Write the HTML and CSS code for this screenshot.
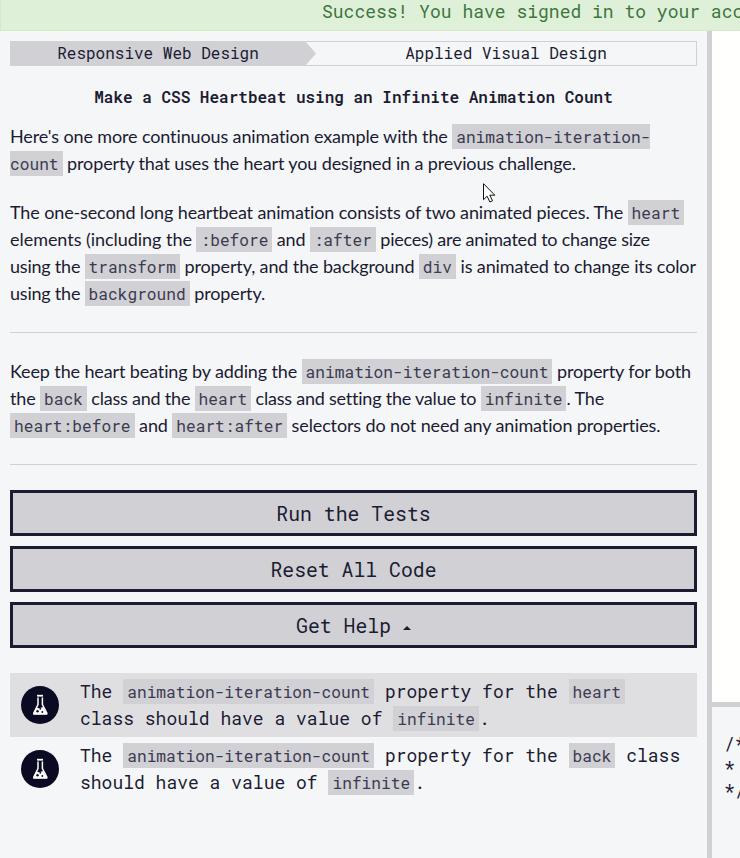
FILE: index.html
```html
<!DOCTYPE html>
<html lang="en">
<head>
<meta charset="utf-8">
<title>Make a CSS Heartbeat using an Infinite Animation Count</title>
<link rel="stylesheet" href="styles.css">
</head>
<body>
<svg class="defs" width="0" height="0">
  <symbol id="flask" viewBox="0 0 38 38">
    <circle cx="19" cy="19" r="19" fill="#0a0a23"/>
    <path d="M16 9.700h6" fill="none" stroke="#fff" stroke-width="1.800"/>
    <path d="M17 11.500v7L12.800 27q-.5 1.100.7 1.100h11.600q1.200 0 .7-1.100L21.400 18.500v-7" fill="none" stroke="#fff" stroke-width="1.500"/>
    <path d="M15.800 21.500q2 1.500 6.500-.5l3.800 7.200H12.300z" fill="#fff"/>
    <circle cx="16.500" cy="25.300" r="1.200" fill="#0a0a23"/>
    <circle cx="19.300" cy="22.800" r=".9" fill="#0a0a23"/>
    <circle cx="21.300" cy="26" r=".9" fill="#0a0a23"/>
  </symbol>
</svg>
<div class="app">
  <div class="flash">Success! You have signed in to your account</div>
  <div class="workspace">
    <main class="instructions">
      <nav class="crumbs">
        <div class="crumb crumb-left">Responsive Web Design</div>
        <div class="crumb crumb-right">Applied Visual Design</div>
      </nav>
      <h1>Make a CSS Heartbeat using an Infinite Animation Count</h1>
      <section class="copy">
        <p>Here's one more continuous animation example with the <code>animation-iteration-<br>count</code> property that uses the heart you designed in a previous challenge.</p>
        <p>The one-second long heartbeat animation consists of two animated pieces. The <code>heart</code><br><span class="loose">elements (including the </span><code>:before</code><span class="tight"> and </span><code>:after</code><span class="tight"> pieces) are animated to change size</span><br><span class="tight">using the </span><code>transform</code> property, and the background <code>div</code> is animated to change its color<br><span class="tight">using the </span><code>background</code> property.</p>
      </section>
      <hr>
      <section class="copy">
        <p>Keep the heart beating by adding the <code>animation-iteration-count</code> property for both<br>the <code>back</code><span class="tight"> class and the </span><code>heart</code><span class="tight"> class and setting the value to </span><code>infinite</code>. The<br><code>heart:before</code> and <code>heart:after</code> selectors do not need any animation properties.</p>
      </section>
      <hr>
      <div class="buttons">
        <button>Run the Tests</button>
        <button>Reset All Code</button>
        <button>Get Help <span class="caret"></span></button>
      </div>
      <ul class="tests">
        <li class="active"><svg class="status"><use href="#flask"/></svg><div>The <code>animation-iteration-count</code> property for the <code>heart</code><br>class should have a value of <code>infinite</code>.</div></li>
        <li><svg class="status"><use href="#flask"/></svg><div>The <code>animation-iteration-count</code> property for the <code>back</code> class<br>should have a value of <code>infinite</code>.</div></li>
      </ul>
    </main>
    <div class="divider"></div>
    <aside class="side">
      <div class="editor"></div>
      <div class="divider-row"></div>
      <pre class="console">/**
* Your test output will go here.
*/</pre>
    </aside>
  </div>
</div>
<svg class="pointer" viewBox="0 0 13 20"><path d="M.5.700v16l3.600-3.500 2.800 5.800 2.600-1.200-2.700-5.600h5z" fill="#fff" stroke="#111" stroke-width="1"/></svg>
</body>
</html>
```
FILE: styles.css
```css
* { box-sizing: border-box; }
body {
  margin: 0;
  overflow: hidden;
  background: #f5f6f7;
  color: #1b1b32;
  font-family: "Roboto Mono", "Liberation Mono", monospace;
  font-weight: 400;
}
.defs { position: absolute; }
.app { display: flex; flex-direction: column; height: 858px; }
.flash {
  height: 31px;
  padding-left: 321px;
  background: #dff0d8;
  border: 1px solid #d6e9c6;
  border-width: 0 0 1px 1px;
  color: #3c763d;
  font-size: 18px;
  line-height: 23px;
  white-space: nowrap;
  overflow: hidden;
}
.workspace { display: flex; flex: 1; min-height: 0; }
.instructions { width: 707px; padding: 10px 10px 0; }
.crumbs { display: flex; height: 25px; font-size: 16px; line-height: 24px; text-align: center; }
.crumb-left {
  z-index: 1;
  width: 306px;
  padding-right: 10px;
  background: #d0d0d5;
  clip-path: polygon(0 0, 295px 0, 306px 50%, 295px 100%, 0 100%);
}
.crumb-right {
  flex: 1;
  margin-left: -11px;
  padding-left: 11px;
  border: 1px solid #d0d0d5;
  border-left: 0;
  line-height: 22px;
}
h1 { margin: 18px 0 14px; font-size: 16px; line-height: 25px; font-weight: 600; text-align: center; }
.copy { font-family: Lato, sans-serif; font-weight: 400; font-size: 18px; line-height: 27px; letter-spacing: -.125px; white-space: nowrap; }
.tight { letter-spacing: -.22px; }
.loose { letter-spacing: -.040px; }
p { margin: 0 0 22px; }
code {
  padding: 2px 4px;
  background: #d0d0d5;
  color: #3b3b4f;
  font-family: "Roboto Mono", "Liberation Mono", monospace;
  font-size: 16.200px;
  font-weight: 400;
  line-height: 1;
  letter-spacing: 0;
  vertical-align: .4px;
}
hr { height: 1px; margin: 25px 0; border: 0; background: #d0d0d5; }
.copy p:last-child { margin: 0; }
.buttons { display: flex; flex-direction: column; gap: 10px; }
button {
  height: 46px;
  padding: 0;
  border: 3px solid #1b1b32;
  background: #d0d0d5;
  color: #1b1b32;
  font: 400 19.800px "Roboto Mono", "Liberation Mono", monospace;
}
.caret { display: inline-block; border: 4px solid transparent; border-top: 0; border-bottom-color: #1b1b32; vertical-align: 3px; }
.tests { margin: 25px 0 0; padding: 0; list-style: none; font-size: 18px; line-height: 27px; white-space: nowrap; }
.tests li { display: flex; height: 64px; padding: 5px 0 5px 11px; }
.tests .active { background: #dfdfe2; }
.status { width: 38px; height: 38px; margin: 8px 21px 0 0; }
.divider { width: 5px; background: #d0d0d5; }
.side { display: flex; flex: 1; flex-direction: column; min-width: 0; }
.editor { height: 671px; background: #fffffe; }
.divider-row { height: 5px; background: #d0d0d5; }
.console { margin: 25px 0 0 12px; overflow: hidden; font: 400 18px/23.500px "Roboto Mono", "Liberation Mono", monospace; }
.pointer { position: absolute; left: 483px; top: 183px; width: 13px; height: 20px; }
```
